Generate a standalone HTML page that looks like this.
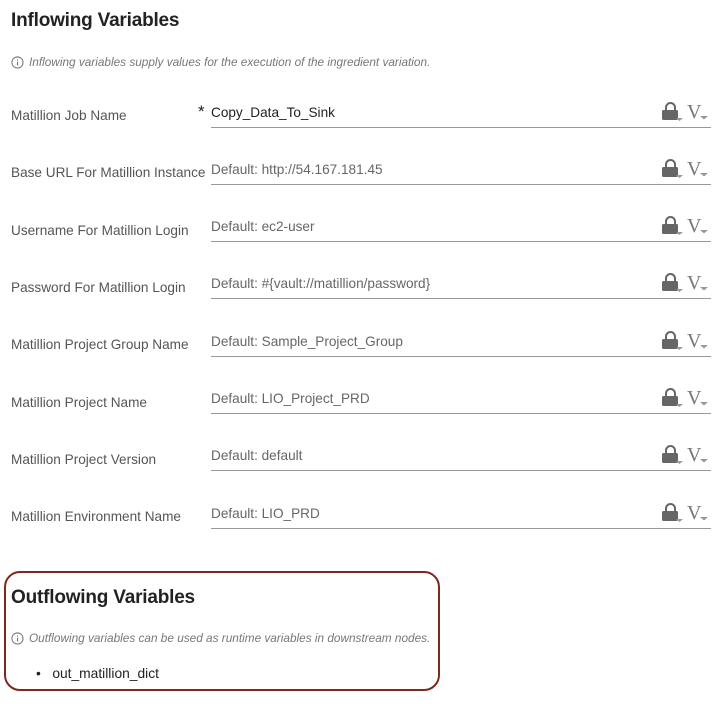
<!DOCTYPE html>
<html><head><meta charset="utf-8"><style>
body{margin:0;width:719px;height:704px;background:#fff;font-family:"Liberation Sans",sans-serif;position:relative;overflow:hidden;color:#333}
.a{position:absolute;white-space:nowrap}
h1{position:absolute;margin:0;font-size:19px;letter-spacing:-0.2px;font-weight:bold;color:#222;left:11px}
.info{position:absolute;left:11px;font-size:11.8px;font-style:italic;color:#777;display:flex;align-items:center;gap:5px;white-space:nowrap}
.info svg{flex:none}
.lab{position:absolute;left:11px;font-size:13.6px;color:#555;white-space:nowrap}
.inp{position:absolute;left:211px;width:500px;border-bottom:1px solid #999;height:28px}
.inp span{position:absolute;left:0;top:6px;font-size:13.6px;color:#666;white-space:nowrap}
.ic{position:absolute;left:448px;top:2px}
.box{position:absolute;left:4px;top:571px;width:432px;height:116px;border:2px solid #7d2a1c;border-radius:16px}
</style></head><body>
<h1 style="top:10px">Inflowing Variables</h1>
<div class="info" style="top:55px"><svg width="13" height="13" viewBox="0 0 14 14"><circle cx="7" cy="7" r="6" fill="none" stroke="#777" stroke-width="1.1"/><rect x="6.4" y="6" width="1.2" height="4.2" fill="#777"/><rect x="6.4" y="3.7" width="1.2" height="1.2" fill="#777"/></svg>Inflowing variables supply values for the execution of the ingredient variation.</div>

<div class="lab" style="top:108px">Matillion Job Name</div>
<div class="a" style="left:198px;top:102px;font-size:17px;color:#222">*</div>
<div class="inp" style="top:99px"><span style="color:#222">Copy_Data_To_Sink</span><div class="ic"><svg width="52" height="22" viewBox="0 0 52 22"><path d="M7 9V6.5a4.5 4.5 0 0 1 9 0V9" fill="none" stroke="#666" stroke-width="2"/><rect x="3" y="9" width="16" height="10" rx="1.5" fill="#666"/><path d="M17 17h7l-3.5 3z" fill="#999"/><text x="28" y="17" font-family="Liberation Serif" font-size="20" fill="#777">V</text><path d="M41 15h8l-4 3.5z" fill="#999"/></svg></div></div>

<div class="lab" style="top:165px">Base URL For Matillion Instance</div>
<div class="inp" style="top:156px"><span>Default: http://54.167.181.45</span><div class="ic"><svg width="52" height="22" viewBox="0 0 52 22"><path d="M7 9V6.5a4.5 4.5 0 0 1 9 0V9" fill="none" stroke="#666" stroke-width="2"/><rect x="3" y="9" width="16" height="10" rx="1.5" fill="#666"/><path d="M17 17h7l-3.5 3z" fill="#999"/><text x="28" y="17" font-family="Liberation Serif" font-size="20" fill="#777">V</text><path d="M41 15h8l-4 3.5z" fill="#999"/></svg></div></div>

<div class="lab" style="top:223px">Username For Matillion Login</div>
<div class="inp" style="top:213px"><span>Default: ec2-user</span><div class="ic"><svg width="52" height="22" viewBox="0 0 52 22"><path d="M7 9V6.5a4.5 4.5 0 0 1 9 0V9" fill="none" stroke="#666" stroke-width="2"/><rect x="3" y="9" width="16" height="10" rx="1.5" fill="#666"/><path d="M17 17h7l-3.5 3z" fill="#999"/><text x="28" y="17" font-family="Liberation Serif" font-size="20" fill="#777">V</text><path d="M41 15h8l-4 3.5z" fill="#999"/></svg></div></div>

<div class="lab" style="top:280px">Password For Matillion Login</div>
<div class="inp" style="top:270px"><span>Default: #{vault://matillion/password}</span><div class="ic"><svg width="52" height="22" viewBox="0 0 52 22"><path d="M7 9V6.5a4.5 4.5 0 0 1 9 0V9" fill="none" stroke="#666" stroke-width="2"/><rect x="3" y="9" width="16" height="10" rx="1.5" fill="#666"/><path d="M17 17h7l-3.5 3z" fill="#999"/><text x="28" y="17" font-family="Liberation Serif" font-size="20" fill="#777">V</text><path d="M41 15h8l-4 3.5z" fill="#999"/></svg></div></div>

<div class="lab" style="top:337px">Matillion Project Group Name</div>
<div class="inp" style="top:328px"><span>Default: Sample_Project_Group</span><div class="ic"><svg width="52" height="22" viewBox="0 0 52 22"><path d="M7 9V6.5a4.5 4.5 0 0 1 9 0V9" fill="none" stroke="#666" stroke-width="2"/><rect x="3" y="9" width="16" height="10" rx="1.5" fill="#666"/><path d="M17 17h7l-3.5 3z" fill="#999"/><text x="28" y="17" font-family="Liberation Serif" font-size="20" fill="#777">V</text><path d="M41 15h8l-4 3.5z" fill="#999"/></svg></div></div>

<div class="lab" style="top:395px">Matillion Project Name</div>
<div class="inp" style="top:385px"><span>Default: LIO_Project_PRD</span><div class="ic"><svg width="52" height="22" viewBox="0 0 52 22"><path d="M7 9V6.5a4.5 4.5 0 0 1 9 0V9" fill="none" stroke="#666" stroke-width="2"/><rect x="3" y="9" width="16" height="10" rx="1.5" fill="#666"/><path d="M17 17h7l-3.5 3z" fill="#999"/><text x="28" y="17" font-family="Liberation Serif" font-size="20" fill="#777">V</text><path d="M41 15h8l-4 3.5z" fill="#999"/></svg></div></div>

<div class="lab" style="top:452px">Matillion Project Version</div>
<div class="inp" style="top:442px"><span>Default: default</span><div class="ic"><svg width="52" height="22" viewBox="0 0 52 22"><path d="M7 9V6.5a4.5 4.5 0 0 1 9 0V9" fill="none" stroke="#666" stroke-width="2"/><rect x="3" y="9" width="16" height="10" rx="1.5" fill="#666"/><path d="M17 17h7l-3.5 3z" fill="#999"/><text x="28" y="17" font-family="Liberation Serif" font-size="20" fill="#777">V</text><path d="M41 15h8l-4 3.5z" fill="#999"/></svg></div></div>

<div class="lab" style="top:509px">Matillion Environment Name</div>
<div class="inp" style="top:500px"><span>Default: LIO_PRD</span><div class="ic"><svg width="52" height="22" viewBox="0 0 52 22"><path d="M7 9V6.5a4.5 4.5 0 0 1 9 0V9" fill="none" stroke="#666" stroke-width="2"/><rect x="3" y="9" width="16" height="10" rx="1.5" fill="#666"/><path d="M17 17h7l-3.5 3z" fill="#999"/><text x="28" y="17" font-family="Liberation Serif" font-size="20" fill="#777">V</text><path d="M41 15h8l-4 3.5z" fill="#999"/></svg></div></div>

<div class="box"></div>
<h1 style="top:587px">Outflowing Variables</h1>
<div class="info" style="top:631px"><svg width="13" height="13" viewBox="0 0 14 14"><circle cx="7" cy="7" r="6" fill="none" stroke="#777" stroke-width="1.1"/><rect x="6.4" y="6" width="1.2" height="4.2" fill="#777"/><rect x="6.4" y="3.7" width="1.2" height="1.2" fill="#777"/></svg>Outflowing variables can be used as runtime variables in downstream nodes.</div>
<div class="a" style="left:36px;top:666px;font-size:13.8px;color:#222">•&nbsp;&nbsp;&nbsp;out_matillion_dict</div>
</body></html>
